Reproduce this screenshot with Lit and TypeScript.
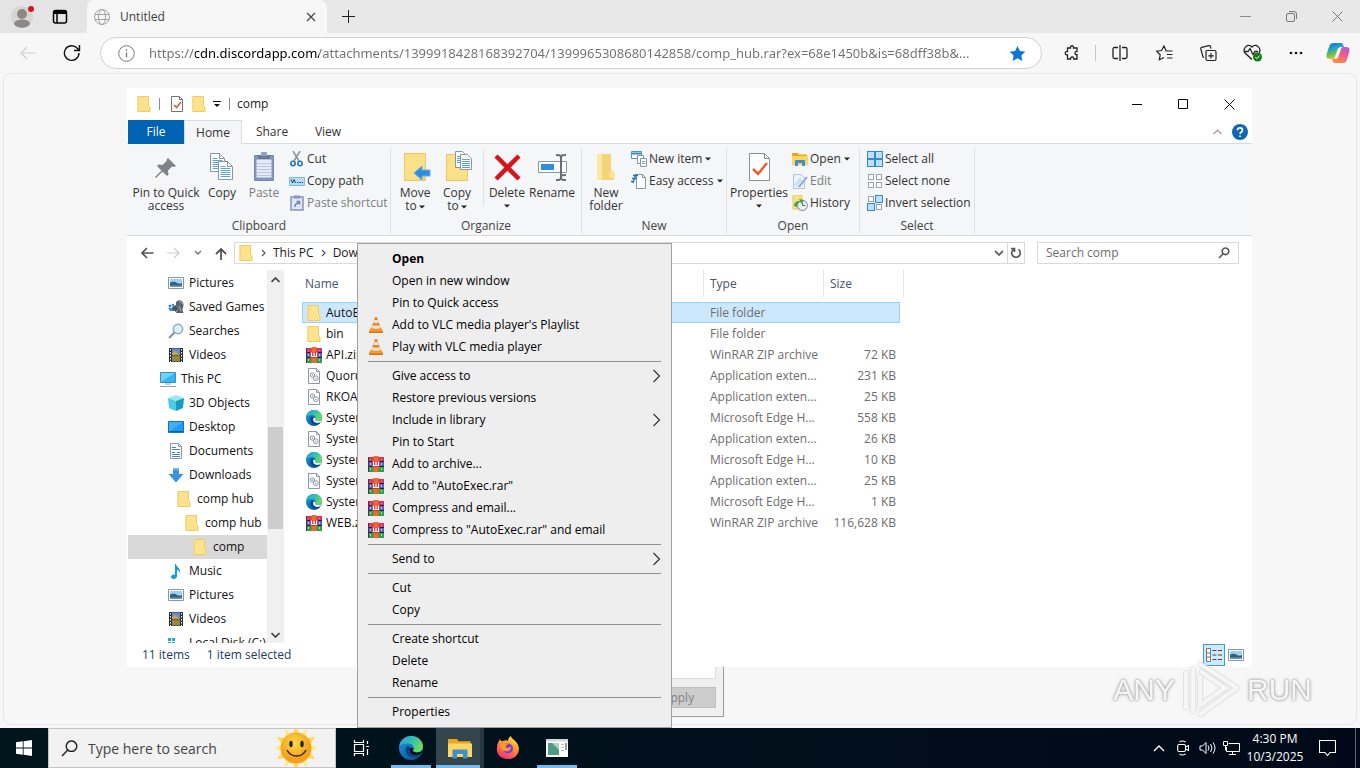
import { LitElement, html, svg, css, nothing, TemplateResult, SVGTemplateResult } from "lit";
import { customElement } from "lit/decorators.js";
import { classMap } from "lit/directives/class-map.js";

const pic = (w: number, h: number, body: SVGTemplateResult, box = `0 0 ${w} ${h}`) =>
  html`<svg class="pic" width=${w} height=${h} viewBox=${box} fill="none" aria-hidden="true">${body}</svg>`;

/* ---- small file-type glyphs, 16 x 16 ---- */
const folder = () => pic(16, 16, svg`
  <path d="M1.500 0h11v16h-11z" fill="#ffe38c"/><path d="M2 .5h10.500v15H2z" stroke="#efcb62"/>
  <path d="M12 9.500c1.800 0 2.500 1 2.500 2.800V16H11z" fill="#f4cf62"/><path d="M12.500 10v5" stroke="#fff0b0"/>`);
const rar = () => pic(16, 16, svg`
  <path d="M0 1h16v4.500H0z" fill="#d8345f"/><path d="M0 6h16v4.500H0z" fill="#5a5fd0"/><path d="M0 11h16v5H0z" fill="#2fa04a"/>
  <path d="M0 5.500h16M0 10.500h16" stroke="#2b2030"/><path d="M.5 1v15" stroke="#5a2c50"/>
  <path d="M2.500 3.500v1M2.500 7v2M2.500 12v2M13.500 3v1M13.500 7v2M13.500 12v2" stroke="#fff9"/>
  <path d="M5.500 0h5v16h-5z" fill="#ee6a2c"/><path d="M4 5h8v6H4z" fill="#c23a3c"/>
  <path d="M5.500 5.500v4h5v-4M8 5.500v4" stroke="#fff" stroke-width="1.200"/>`);
const dll = () => pic(16, 16, svg`
  <path d="M2.500.5h8l3 3v12h-11z" fill="#fff" stroke="#8c98a8"/><path d="M10.500.5v3h3" stroke="#8c98a8"/>
  <circle cx="6.500" cy="7" r="2.200" stroke="#8b96a5"/><circle cx="9.800" cy="10.200" r="2.400" stroke="#8b96a5"/>
  <circle cx="6.500" cy="7" r=".8" fill="#8b96a5"/><circle cx="9.800" cy="10.200" r=".8" fill="#8b96a5"/>`);
const edge = (s = 16) => pic(s, s, svg`
  <defs><linearGradient id="eg" x1="0" y1="0" x2="1" y2=".4"><stop offset="0" stop-color="#1fa2dc"/><stop offset=".6" stop-color="#35c1b1"/><stop offset="1" stop-color="#6bdc5c"/></linearGradient>
  <linearGradient id="eb" x1="0" y1="0" x2=".6" y2="1"><stop offset="0" stop-color="#1b9de2"/><stop offset="1" stop-color="#0c59a4"/></linearGradient></defs>
  <circle cx="12" cy="12" r="12" fill="url(#eb)"/>
  <path d="M.2 10.500C1 4.500 6 0 12 0c7 0 12 5 12 10.500 0 3.600-2.800 6-6 6-2.500 0-4.300-1-4.300-1.900 0-.6 1-.9 1-2.700 0-2.300-2.300-4.400-5.700-4.400C4.500 7.500 1 9 .2 10.500z" fill="url(#eg)"/>
  <path d="M9 9.500c-3 2-3.200 6.500-.6 9.500 3.200 3.600 9.200 3.400 13 .2-3.800 1.600-8 .9-10-1.900-1.200-1.700-1.400-3.700.2-5.600z" fill="#123f86"/>
  ${s < 20 ? svg`<path d="M11.600 11.700c-1.300 1.400-1.400 3.500-.1 5.200 2.200 2.900 6.700 3.300 10.300 1.200L24 13c-1 2.400-3.300 3.500-6 3.500-2.500 0-4.300-1-4.300-1.900 0-.6 1-.9 1-2.700z" fill="#fff" opacity=".9"/>`
    : svg`<path d="M11.600 11.700c-1.300 1.400-1.400 3.500-.1 5.200 2.200 2.900 6.700 3.300 10.300 1.200L24 13c-1 2.400-3.300 3.500-6 3.500-2.500 0-4.300-1-4.300-1.900 0-.6 1-.9 1-2.700z" fill="#00131c"/>`}`, "0 0 24 24");
const pictures = () => pic(16, 16, svg`
  <path d="M.5 2.500h15v11H.5z" fill="#fff" stroke="#8796a5"/><path d="M2 4h12v8H2z" fill="#9fd0f2"/>
  <path d="M2 8c3-2 5-1 7 0s4 1 5 0v4H2z" fill="#2e6285"/><path d="M2 10.500h12V12H2z" fill="#6d98b4"/>`);
const games = () => pic(16, 16, svg`
  <circle cx="2" cy="7" r="1.500" fill="#2a86d8"/><circle cx="5" cy="6" r="1.300" fill="#3a8fd8"/><path d="M0 9h6v3H2z" fill="#3a8fd8"/><path d="M4 8l4-2 2 4-2 3-3-2z" fill="#46525e"/>
  <path d="M9 2c3-2 6.500 0 6.500 4 0 2-1 3-1 5l1 3H8l2-4C8 8 7 4 9 2z" fill="#59636c"/><path d="M11 3c1-.8 3 0 3 2M11 7l2 5" stroke="#aab4bb"/>`);
const searches = () => pic(16, 16, svg`
  <circle cx="10" cy="6" r="4.700" fill="#d7eefc" stroke="#8fa9bd" stroke-width="1.500"/><path d="M6.500 9.500 1 15" stroke="#7b93a6" stroke-width="2"/>`);
const videos = () => pic(16, 16, svg`
  <path d="M1 1h14v14H1z" fill="#26303c"/><path d="M4 1.500h8V8H4z" fill="#6e8bc8"/><path d="M4 8.500h8v6H4z" fill="#9a8440"/>
  <path d="M4 6l3-2 5 4H4z" fill="#c4a64b"/><path d="M2.500 2v13M13.500 2v13" stroke="#fff" stroke-dasharray="1.500 1.500"/>`);
const thisPc = () => pic(16, 16, svg`
  <path d="M.5 1.500h15v10H.5z" fill="#31b4f3" stroke="#3b8ec0"/><path d="M1 2h14L1 11z" fill="#6fd0fb"/><path d="M5 13h6M0 15.500h16" stroke="#8ea0ad"/>`);
const cube = () => pic(16, 16, svg`
  <path d="M8 0l8 3-8 3-8-3z" fill="#9be7f3"/><path d="M0 3l8 3v10l-7-3z" fill="#49cbe0"/><path d="M16 3L8 6v10l7-3z" fill="#149dbd"/>`);
const desktop = () => pic(16, 16, svg`
  <path d="M.5 2.500h15v11H.5z" fill="#1e9af0" stroke="#1771b8"/><path d="M1 3h14L1 13z" fill="#3cb0fa"/><path d="M1 12.500h14" stroke="#1260a0"/>`);
const documents = () => pic(16, 16, svg`
  <path d="M2.500.5h8l3 3v12h-11z" fill="#fff" stroke="#8c98a8"/><path d="M10.500.5v3h3" stroke="#8c98a8"/>
  <path d="M4 4.500h4M4 6.500h8M4 9.500h3M9 9.500h3M4 11.500h8M4 13.500h8" stroke="#3b8ac9"/>`);
const downloads = () => pic(16, 16, svg`<path d="M5 1h6v6h4.500L8 15.500.5 7H5z" fill="#3b93dc"/><path d="M5 1h6v2H5z" fill="#79b9ee"/>`);
const music = () => pic(16, 16, svg`
  <path d="M8 1c0 3 5 4 4 9-.5-2-2-3-3-3v6c0 4-6 3.500-6 1 0-2 2.500-3 4-2V1z" fill="#1e95e4"/>`);
const disk = () => pic(16, 16, svg`
  <path d="M0 3h3v3H0zM4 3h3v3H4zM0 7h3v2H0zM4 7h3v2H4z" fill="#22a7e0"/><path d="M0 11h16v3H0z" fill="#b9c0c6"/><path d="M8 8.500h7" stroke="#99a4ac"/>`);
const vlc = () => pic(16, 16, svg`
  <path d="M3 10.500h10l2.300 4H.7z" fill="#f79a24"/><path d="M1 14.200h14V16H1z" fill="#e07410"/>
  <path d="M7 0h2l3.700 11c-1 1.700-8.400 1.700-9.400 0z" fill="#ef8420"/><path d="M6.100 3h3.800l1 3H5.100zM4.200 8.500h7.600l.8 2.500c-2 1.200-7.200 1.200-9.200 0z" fill="#e6e2dc"/>`);

/* ---- ribbon glyphs ---- */
const pin = () => pic(32, 32, svg`<path d="M18 7l8 8-2 1-2-.500-4 4 .5 4-1.500 1.500-4.500-4.500L6 27l-1-1 6.500-6.500L7 15l1.500-1.500 4 .5 4-4L17 8z" fill="#7d8389"/>`);
const page = (x: number, y: number) => svg`
  <path d=${`M${x} ${y}h9l5 5v13h-14z`} fill="#fff" stroke="#8796a8"/><path d=${`M${x + 9} ${y}v5h5`} stroke="#8796a8"/>
  <path d=${`M${x + 2} ${y + 5}h5M${x + 2} ${y + 7}h10M${x + 2} ${y + 9}h10M${x + 2} ${y + 11}h10M${x + 2} ${y + 13}h10M${x + 2} ${y + 15}h10`} stroke="#5aa2dc"/>`;
const copyBig = () => pic(32, 32, svg`${page(4.5, 2.5)}${page(12.5, 10.5)}`);
const pasteBig = () => pic(32, 32, svg`
  <path d="M6.500 4.500h19v25h-19z" fill="#8496bd" stroke="#7488b2"/><path d="M8.500 8.500h15v18h-15z" fill="#e5ebf6"/>
  <path d="M9 12.500h14M9 15.500h14M9 18.500h14M9 21.500h14M9 24.500h14" stroke="#b9c7de"/><path d="M10 4h12v4H10z" fill="#66799f"/><path d="M13 1h6v4h-6z" fill="#93a4c6"/>`);
const moveTo = () => pic(32, 32, svg`
  <path d="M5.500 2.500h21v27h-21z" fill="#fbe08a" stroke="#ecc75f"/><path d="M27 20v10h-7v-6z" fill="#f1ce6a"/>
  <path d="M15 22l8-7v4h8v6h-8v4z" fill="#2f8de0" stroke="#6cb0ea"/>`);
const copyTo = () => pic(32, 32, svg`
  <path d="M5.500 3.500h21v26h-21z" fill="#fbe08a" stroke="#ecc75f"/>
  <path d="M14.500.5h7l4 4v12h-11z" fill="#fff" stroke="#8796a8"/><path d="M19.500 3.500h7l4 4v11h-11z" fill="#fff" stroke="#8796a8"/>
  <path d="M16 5.500h3M16 7.500h3M16 9.500h3M16 11.500h3M21 8.500h8M21 10.500h8M21 12.500h8M21 14.500h8M21 16.500h8" stroke="#5aa2dc"/>`);
const deleteBig = () => pic(32, 32, svg`<path d="M5 5l23 23M28 5L5 28" stroke="#d6141e" stroke-width="4.500"/>`);
const rename = () => pic(32, 32, svg`
  <path d="M2.500 10.500h28v11h-28z" fill="#fff" stroke="#8796a8"/><path d="M5 13h13v6H5z" fill="#2f8de0"/>
  <path d="M20 4c3 0 5 0 5 2.500v20c0-2.500 0-2.500 5-2.500M30 4c-3 0-5 0-5 2.500M20 29c3 0 5 0 5-2.500 0 2.500 2 2.500 5 2.500" stroke="#666e76" stroke-width="2"/>`);
const newFolder = () => pic(32, 32, svg`<path d="M7 3h14v18l3 3v5H7z" fill="#f6d377"/><path d="M7 3h5v26H7z" fill="#fbe7a6"/><path d="M21 18l4 4v6l-6-2z" fill="#fbe4a0"/>`);
const propsBig = () => pic(32, 32, svg`
  <path d="M6.500 2.500h15l5 5v22h-20z" fill="#fff" stroke="#8b8f94"/><path d="M21.500 2.500v5h5" stroke="#8b8f94"/><path d="M10 18l5 5 9-11" stroke="#ef5a2c" stroke-width="2.500"/>`);
const cut = () => pic(16, 16, svg`
  <path d="M4 0l6 10M11 0L5 10" stroke="#8a929a" stroke-width="1.500"/><circle cx="4" cy="12.500" r="2.200" stroke="#2675bd" stroke-width="1.600"/><circle cx="11" cy="12.500" r="2.200" stroke="#2675bd" stroke-width="1.600"/>`);
const copyPath = () => pic(16, 16, svg`<path d="M.5 4.500h15v8H.5z" fill="#b4dcf7" stroke="#7db9e3"/><path d="M2 6.500l1.500 3.500L5 6.500 6.500 10M8 9.500h1.500M10.500 9.500H12M13 9.500h1" stroke="#17456e"/>`);
const pasteShort = () => pic(16, 16, svg`
  <path d="M2 2h12v13H2z" fill="#dfe7f4" stroke="#8496bd" stroke-width="1.500"/><path d="M5 .5h6v3H5z" fill="#8496bd"/><path d="M6 12c0-3 1-4 4-4M7.500 6.500h3v3" stroke="#6d83b0" stroke-width="1.500"/>`);
const newItem = () => pic(16, 16, svg`
  <path d="M.5.5h10v7H.5z" fill="#fff" stroke="#5b8dc0"/><path d="M1 2.500h9" stroke="#3a82c9" stroke-width="2"/><path d="M6.500 4.500h6v8h-6z" fill="#fff" stroke="#8796a8"/>
  <path d="M9.500 7.500h6v8h-6z" fill="#fff" stroke="#8796a8"/><path d="M11 10.500h3M11 12.500h3" stroke="#5aa2dc"/>`);
const easy = () => pic(16, 16, svg`
  <path d="M5.500 1.500h6l3 3v11h-9z" fill="#fff" stroke="#8796a8"/><path d="M11.500 1.500v3h3" stroke="#8796a8"/><path d="M2 2.500h5M1 5.500h5M0 8.500h3M5 1l-3 9" stroke="#2b6fb5" stroke-width="1.300"/>`);
const openSm = (s = 16) => pic(s, s, svg`
  <path d="M0 2h6l1 1.500h8V14H0z" fill="#e9a820"/><path d="M0 5h16v9H0z" fill="#fbd662"/><path d="M3 9h10v6h-3v-3H6v3H3z" fill="#3f8fce"/>`, "0 0 16 16");
const edit = () => pic(16, 16, svg`<path d="M1.500 1.500h8l3 3v11h-11z" fill="#edf3fa" stroke="#b3c4d8"/><path d="M2 12l6-8 3 4-5 6z" fill="#cddff2"/><path d="M15 4L7 14" stroke="#93a9c6" stroke-width="2"/>`);
const history = () => pic(16, 16, svg`
  <path d="M1 0h9v14H1z" fill="#fbe08a" stroke="#ecc75f"/><circle cx="10.500" cy="10.500" r="5" fill="#e8eef4" stroke="#7c8b9a"/><path d="M10.500 7.500v3h3" stroke="#5a6b7a"/><path d="M2 11c0-3 2-5 6-5l-1-2 5 1-3 4-.5-2C6 7 5 9 5 12z" fill="#3fa63c"/>`);
const selectPic = (kind: string) => {
  const on = (i: number) => kind === "all" || (kind === "invert" && (i === 1 || i === 2));
  return pic(16, 16, svg`${[0, 1, 2, 3].map((i) => {
    const x = (i % 2) * 8 + (on(i) ? 0.5 : 1.5), y = (i > 1 ? 8 : 0) + (on(i) ? 0.5 : 1.5), s = on(i) ? 7 : 5;
    return svg`<rect x=${x} y=${y} width=${s} height=${s} fill=${on(i) ? "#bfe0fa" : "#fff"} stroke=${on(i) ? "#2f8bd8" : "#9da1a5"}/>`;
  })}`);
};
const propsSm = () => pic(16, 16, svg`
  <path d="M2.500.5h8l3 3v12h-11z" fill="#fff" stroke="#70757a"/><path d="M10.500.5v3h3" stroke="#70757a"/><path d="M5 9l2.500 2.500L12 6" stroke="#e26036" stroke-width="1.700"/>`);
const caret = (extra = "") => html`<svg class="pic ${extra}" width="6" height="4" viewBox="0 0 6 4" aria-hidden="true"><path d="M0 .5h6L3 3.500z" fill="#222"/></svg>`;
const stroke = (w: number, h: number, d: string, color = "#111", sw = 1) =>
  pic(w, h, svg`<path d=${d} stroke=${color} stroke-width=${sw}/>`);

type Glyph = () => TemplateResult;
const TREE: [Glyph, string, number, boolean?][] = [
  [pictures, "Pictures", 1], [games, "Saved Games", 1], [searches, "Searches", 1], [videos, "Videos", 1],
  [thisPc, "This PC", 0], [cube, "3D Objects", 1], [desktop, "Desktop", 1], [documents, "Documents", 1],
  [downloads, "Downloads", 1], [folder, "comp hub", 2], [folder, "comp hub", 3], [folder, "comp", 4, true],
  [music, "Music", 1], [pictures, "Pictures", 1], [videos, "Videos", 1], [disk, "Local Disk (C:)", 1],
];
const FILES: [Glyph, string, string, string][] = [
  [folder, "AutoExec", "File folder", ""], [folder, "bin", "File folder", ""],
  [rar, "API.zip", "WinRAR ZIP archive", "72 KB"], [dll, "Quorum", "Application exten...", "231 KB"],
  [dll, "RKOA", "Application exten...", "25 KB"], [() => edge(), "System", "Microsoft Edge H...", "558 KB"],
  [dll, "System", "Application exten...", "26 KB"], [() => edge(), "System", "Microsoft Edge H...", "10 KB"],
  [dll, "System", "Application exten...", "25 KB"], [() => edge(), "System", "Microsoft Edge H...", "1 KB"],
  [rar, "WEB.zip", "WinRAR ZIP archive", "116,628 KB"],
];
type Entry = { t: string; icon?: Glyph; sub?: boolean; bold?: boolean } | null;
const MENU: Entry[] = [
  { t: "Open", bold: true }, { t: "Open in new window" }, { t: "Pin to Quick access" },
  { t: "Add to VLC media player's Playlist", icon: vlc }, { t: "Play with VLC media player", icon: vlc }, null,
  { t: "Give access to", sub: true }, { t: "Restore previous versions" }, { t: "Include in library", sub: true }, { t: "Pin to Start" },
  { t: "Add to archive...", icon: rar }, { t: 'Add to "AutoExec.rar"', icon: rar }, { t: "Compress and email...", icon: rar },
  { t: 'Compress to "AutoExec.rar" and email', icon: rar }, null, { t: "Send to", sub: true }, null,
  { t: "Cut" }, { t: "Copy" }, null, { t: "Create shortcut" }, { t: "Delete" }, { t: "Rename" }, null, { t: "Properties" },
];

const base = css`
  * { box-sizing: border-box; }
  button, input { font: inherit; color: inherit; border: 0; background: none; padding: 0; margin: 0; outline: 0; border-radius: 0; }
  .pic { display: block; flex: none; }
`;

@customElement("browser-chrome")
class BrowserChrome extends LitElement {
  static styles = [base, css`
    :host { display: block; font-size: 12px; color: #3b3b3b; }
    button { display: flex; align-items: center; justify-content: center; flex: none; }
    .tabs { display: flex; height: 33px; background: #e8e8e8; align-items: stretch; }
    .lead { display: flex; width: 87px; padding-left: 3px; background: #e4e4e4; border-bottom-right-radius: 8px; }
    .lead button { width: 38px; }
    .tab { display: flex; align-items: center; gap: 10px; width: 240px; padding: 0 10px 0 7px; background: #f7f7f7; border-radius: 8px 8px 0 0; }
    .tab span { flex: 1; }
    .plus { width: 42px; }
    .gap { flex: 1; }
    .ctl { width: 46px; }
    .bar { display: flex; height: 40px; align-items: center; padding: 0 2px 0 6px; background: #f7f7f7; }
    .nav { width: 44px; height: 32px; }
    .pilot { width: 40px; }
    .url { flex: 1; display: flex; align-items: center; gap: 14px; height: 32px; margin: 0 8px 0 6px; padding: 0 15px 0 17px;
      background: #fff; border: 1px solid #d2d2d2; border-radius: 16px; min-width: 0; }
    .url input { flex: 1; min-width: 0; height: 24px; font-family: "Noto Sans", sans-serif; font-size: 13px; color: #707070;
      background: linear-gradient(90deg, #707070 46px, #000 46px, #000 170px, #707070 170px); -webkit-background-clip: text; background-clip: text; -webkit-text-fill-color: transparent; }
    .rule { width: 1px; height: 16px; margin: 0 2px 0 1px; background: #c8c8c8; }
  `];
  render() {
    return html`
      <div class="tabs">
        <div class="lead">
          <button aria-label="Profile">${pic(24, 24, svg`<circle cx="12" cy="12" r="11" fill="#d8d6d4"/><circle cx="12" cy="9" r="5" fill="#8b8886"/><path d="M4 19c0-6 16-6 16 0-3 5-13 5-16 0z" fill="#8b8886"/><circle cx="21" cy="4" r="3" fill="#d81124"/>`, "0 0 24 24")}</button>
          <button aria-label="Tab actions">${pic(16, 16, svg`<rect x="1.500" y="1.500" width="13" height="12.500" rx="2" stroke="#000" stroke-width="1.500"/><path d="M1 2h14v3H1z" fill="#000"/><path d="M5 4v10" stroke="#000" stroke-width="1.500"/>`)}</button>
        </div>
        <div class="tab">
          ${pic(16, 16, svg`<g stroke="#a2a2a2"><circle cx="8" cy="8" r="7.500"/><ellipse cx="8" cy="8" rx="3.500" ry="7.500"/><path d="M1 5.500h14M1 10.500h14"/></g>`)}
          <span>Untitled</span>
          <button aria-label="Close tab">${stroke(12, 12, "M2 2l8 8M10 2l-8 8", "#444", 1.2)}</button>
        </div>
        <button class="plus" aria-label="New tab">${stroke(15, 15, "M7.5 1v13M1 7.5h13", "#222")}</button>
        <div class="gap"></div>
        <button class="ctl" aria-label="Minimize">${stroke(11, 11, "M0 5.500h11", "#8a8a8a")}</button>
        <button class="ctl" aria-label="Restore">${stroke(11, 11, "M2 2.500h5q1.500 0 1.500 1.500v5q0 1.500-1.500 1.500H2Q.5 10.500.5 9V4Q.5 2.500 2 2.500zM3 .5h5Q10.500.5 10.500 3v5", "#777")}</button>
        <button class="ctl" aria-label="Close">${stroke(11, 11, "M.5.5l10 10M10.500.5l-10 10", "#777")}</button>
      </div>
      <div class="bar">
        <button class="nav" aria-label="Back">${stroke(16, 14, "M15.500 7H1M7 1L1 7l6 6", "#cfcfcf", 1.2)}</button>
        <button class="nav" aria-label="Reload">${stroke(18, 18, "M16 9A7.300 7.300 0 1 1 14 4l2 2M16.500 1v5.500H11", "#111", 1.4)}</button>
        <div class="url">
          ${pic(17, 17, svg`<circle cx="8.500" cy="8.500" r="7.800" stroke="#777"/><path d="M8.500 7.500v5M8.500 4.500v1.500" stroke="#777" stroke-width="1.300"/>`)}
          <input aria-label="Address" spellcheck="false" value="https://cdn.discordapp.com/attachments/1399918428168392704/1399965308680142858/comp_hub.rar?ex=68e1450b&is=68dff38b&..." />
          ${pic(17, 17, svg`<path d="M8.500 1l2.400 4.900 5.400.8-3.900 3.800.9 5.400-4.800-2.600-4.800 2.600.9-5.400L.7 6.700l5.400-.8z" fill="#0b78d4"/>`)}
        </div>
        <button class="nav" aria-label="Extensions">${stroke(16, 16, "M3.500 3h3c-.6-3 3.600-3 3 0h3.500v3.500c-2.700-.5-2.700 3.700 0 3.200V14H9.800c.5-2.700-3.700-2.700-3.200 0H3.500V9.800c-3 .6-3-3.900 0-3.300z", "#222", 1.3)}</button>
        <span class="rule"></span>
        <button class="nav" aria-label="Split screen">${stroke(16, 16, "M6 2.500H2.500Q1 2.500 1 4v8q0 1.500 1.500 1.500H6M10 2.500h3.500Q15 2.500 15 4v8q0 1.500-1.500 1.500H10M8 0v16", "#222", 1.3)}</button>
        <button class="nav" aria-label="Favorites">${stroke(17, 16, "M10 5.500L8 1 5.500 5.500l-5 .7 3.700 3.600-.9 5L8 12.500M9.500 6h7M11 9.500h5.500M11 13h5.500", "#222", 1.2)}</button>
        <button class="nav" aria-label="Collections">${stroke(17, 17, "M6 6.500q0-1 1-1h7.500q1.500 0 1.500 1.500v7q0 1.500-1.500 1.500h-7Q6 15.500 6 14zM11 8v5.500M8.300 10.800h5.500M4 12.500l-1-.7L.8 4q-.3-1.200.9-1.600L8.700.7q1.300-.2 1.800 1l.5 2", "#222", 1.2)}</button>
        <button class="nav" aria-label="Browser essentials">${pic(19, 18, svg`<path d="M9 15.500L2 9C-1 4.500 5-1.500 9 3c4-4.500 10 1.500 7 6M1 7.500h4l2-3 3 6 2-3h3" stroke="#222" stroke-width="1.300"/><circle cx="14.500" cy="13" r="4.500" fill="#117d1b"/><path d="M12.300 13l1.600 1.600 2.800-3" stroke="#fff"/>`)}</button>
        <button class="nav" aria-label="Settings and more">${pic(14, 4, svg`<circle cx="2" cy="2" r="1.300" fill="#111"/><circle cx="7" cy="2" r="1.300" fill="#111"/><circle cx="12" cy="2" r="1.300" fill="#111"/>`)}</button>
        <button class="nav pilot" aria-label="Copilot">${pic(24, 22, svg`
          <defs><linearGradient id="ca" x1="0" y1="0" x2=".4" y2="1"><stop offset="0" stop-color="#1b5fd0"/><stop offset=".4" stop-color="#1aa0d8"/><stop offset=".7" stop-color="#6cc04a"/><stop offset="1" stop-color="#f0c020"/></linearGradient>
          <linearGradient id="cb" x1="1" y1="0" x2=".3" y2="1"><stop offset="0" stop-color="#a45ce8"/><stop offset=".5" stop-color="#ef5c8c"/><stop offset="1" stop-color="#ff8a3c"/></linearGradient></defs>
          <path d="M8 1h7c2 0 2 2 3 4h-3c-2 0-3 1-4 4l-2 6c-.5 1.500-1 2-3 2H4c-4 0-4-3-3-6l2-6c1-3 2-4 5-4z" fill="url(#ca)"/>
          <path d="M16 21H9c-2 0-2-2-3-4h3c2 0 3-1 4-4l2-6c.5-1.500 1-2 3-2h2c4 0 4 3 3 6l-2 6c-1 3-2 4-5 4z" fill="url(#cb)"/>`)}</button>
      </div>`;
  }
}

@customElement("file-explorer")
class FileExplorer extends LitElement {
  static styles = [base, css`
    :host { display: flex; flex-direction: column; background: #fff; font-size: 12px; line-height: 16px; color: #1a1a1a; }
    .title { display: flex; align-items: center; height: 32px; padding-left: 9px; flex: none; }
    .title .bar { width: 1px; height: 12px; background: #8c8c8c; }
    .qa { display: flex; align-items: center; width: 93px; gap: 6px; }
    .qa .bar { margin: 0 3px 0 1px; }
    .name { flex: 1; padding-left: 7px; }
    .wc { display: flex; width: 46px; height: 32px; align-items: center; justify-content: center; }
    .tabs { display: flex; height: 24px; flex: none; padding-left: 1px; border-bottom: 1px solid #dadbdc; color: #333; }
    .tabs button { height: 24px; width: 56px; }
    .tabs .file { background: #0063b1; color: #fff; }
    .tabs .home { width: 58px; background: #f5f6f7; border: 1px solid #dadbdc; border-bottom: 0; }
    .tabs .share { width: 60px; }
    .tabs .view { width: 52px; }
    .help { display: flex; gap: 10px; align-items: center; margin-left: auto; padding-right: 4px; }
    .ribbon { display: flex; height: 92px; flex: none; padding-left: 1px; background: #f5f6f7; border-bottom: 1px solid #dadbdc; color: #333; }
    .group { display: flex; flex-direction: column; border-right: 1px solid #e0e1e2; margin: 4px 0 2px; }
    .g1 { width: 263px; } .g2 { width: 191px; } .g3 { width: 145px; } .g4 { width: 133px; } .g5 { width: 115px; }
    .tools { display: flex; flex: 1; padding: 0 3px; }
    .cap { text-align: center; height: 15px; color: #444; }
    .big { display: flex; flex-direction: column; align-items: center; flex: none; width: 42px; padding-top: 3px; line-height: 13px; text-align: center; gap: 3px; height: 66px; }
    .w70 { width: 70px; } .w58 { width: 58px; } .w48 { width: 48px; }
    .big .lab { display: block; white-space: pre-line; }
    .inl { display: inline-block; vertical-align: middle; margin-left: 2px; }
    .drop { display: block; margin: 5px auto 0; }
    .off { color: #7c7c7c; }
    .vr { width: 1px; height: 56px; margin: 2px 2px 0 5px; background: #e0e1e2; }
    .col { display: flex; flex-direction: column; padding-left: 4px; }
    .sm { display: flex; align-items: center; height: 22px; gap: 2px; white-space: nowrap; }
    .sm .inl { margin-left: 1px; }
    .addr { display: flex; align-items: center; height: 34px; flex: none; padding: 0 13px; }
    .arrows { display: flex; align-items: center; width: 94px; gap: 13px; }
    .path { display: flex; flex: 1; align-items: center; height: 22px; border: 1px solid #d9d9d9; padding-left: 3px; gap: 7px; }
    .path .tail { display: flex; align-items: center; margin-left: auto; height: 20px; }
    .path .ref { display: flex; align-items: center; justify-content: center; width: 17px; height: 20px; border-left: 1px solid #d9d9d9; margin-left: 3px; }
    .find { display: flex; align-items: center; width: 202px; height: 22px; border: 1px solid #d9d9d9; margin-left: 12px; padding: 0 8px; }
    .find input { flex: 1; min-width: 0; }
    .find input::placeholder { color: #6d6d6d; opacity: 1; }
    .body { display: flex; flex: 1; min-height: 0; }
    .tree { width: 140px; overflow: hidden; padding: 1px 0 0 1px; }
    .node { display: flex; align-items: center; gap: 5px; height: 24px; width: 139px; white-space: nowrap; color: #111; }
    .l0 { padding-left: 32px; } .l1 { padding-left: 40px; } .l2 { padding-left: 48px; } .l3 { padding-left: 56px; } .l4 { padding-left: 64px; }
    .node.on { background: #d9d9d9; }
    .scroll { display: flex; flex-direction: column; width: 17px; background: #f0f0f0; align-items: center; justify-content: space-between; padding: 7px 0 5px; margin-right: 18px; }
    .track { flex: 1; width: 15px; display: grid; grid-template-rows: 140fr 103fr 99fr; margin: 4px 0; }
    .thumb { grid-row: 2; background: #cdcdcd; }
    table { border-spacing: 0; table-layout: fixed; width: 602px; align-self: flex-start; }
    th { height: 27px; padding: 0 6px; text-align: left; font-weight: 400; color: #44546f; border-right: 1px solid #e5e5e5; }
    th:first-child { padding-left: 3px; }
    th:nth-child(3) { border-right: 0; }
    td { height: 21px; padding: 0 4px 0 6px; color: #6d6d6d; overflow: hidden; white-space: nowrap; }
    td:first-child { padding-left: 4px; color: #111; }
    td:nth-child(3) { text-align: right; padding-left: 0; }
    .cell { display: flex; align-items: center; gap: 4px; }
    .spacer td { height: 5px; padding: 0; }
    .c1 { width: 402px; } .c2 { width: 120px; } .c3 { width: 76px; } .c4 { width: 4px; }
    .sel td { background: #cce8ff; border: solid #99d1ff; border-width: 1px 0; }
    .sel td:first-child { border-left-width: 1px; padding-left: 3px; }
    .sel td:nth-child(3) { border-right-width: 1px; }
    .sel td:nth-child(4) { background: none; border: 0; padding: 0; }
    .status { display: flex; align-items: center; height: 24px; flex: none; padding: 0 8px 0 15px; gap: 17px; color: #1d3a66; }
    .modes { display: flex; align-items: center; margin-left: auto; gap: 3px; }
    .modes button { display: flex; align-items: center; justify-content: center; width: 16px; height: 22px; }
    .modes .cur { width: 22px; background: #cdeaff; border: 1px solid #3f9bdc; }
  `];
  big(icon: Glyph, label: string | TemplateResult, cls = "") {
    return html`<button class="big ${cls}">${icon()}<span class="lab">${label}</span></button>`;
  }
  sm(icon: TemplateResult, label: string, drop = false, off = false) {
    return html`<button class=${classMap({ sm: true, off })}>${icon}<span>${label}</span>${drop ? caret("inl") : nothing}</button>`;
  }
  group(cls: string, cap: string, body: TemplateResult) {
    return html`<section class="group ${cls}"><div class="tools">${body}</div><div class="cap">${cap}</div></section>`;
  }
  render() {
    const crumb = stroke(5, 8, "M1 1l3 3-3 3", "#555", 1.2);
    return html`
      <header class="title">
        <div class="qa">${folder()}<i class="bar"></i>${propsSm()}${folder()}${pic(8, 8, svg`<path d="M0 1.500h8" stroke="#111"/><path d="M1 4h6L4 7z" fill="#111"/>`)}</div>
        <i class="bar"></i><span class="name">comp</span>
        <button class="wc" aria-label="Minimize">${stroke(10, 10, "M0 5.500h10", "#000")}</button>
        <button class="wc" aria-label="Maximize">${stroke(10, 10, "M.5.5h9v9h-9z", "#000")}</button>
        <button class="wc" aria-label="Close">${stroke(11, 11, "M.5.5l10 10M10.500.5l-10 10", "#000")}</button>
      </header>
      <nav class="tabs">
        <button class="file">File</button><button class="home">Home</button><button class="share">Share</button><button class="view">View</button>
        <div class="help">${stroke(9, 6, "M.5 5l4-4 4 4", "#9a9a9a", 1.2)}
          ${pic(16, 16, svg`<circle cx="8" cy="8" r="8" fill="#0f66b5"/><path d="M5.500 6.200c0-3.200 5-3 5 0 0 1.800-2.400 1.800-2.400 3.800M8 11.500v1.500" stroke="#fff" stroke-width="1.700"/>`)}</div>
      </nav>
      <div class="ribbon">
        ${this.group("g1", "Clipboard", html`
          ${this.big(pin, "Pin to Quick\naccess", "w70")}${this.big(copyBig, "Copy")}${this.big(pasteBig, "Paste", "off")}
          <div class="col">${this.sm(cut(), "Cut")}${this.sm(copyPath(), "Copy path")}${this.sm(pasteShort(), "Paste shortcut", false, true)}</div>`)}
        ${this.group("g2", "Organize", html`
          ${this.big(moveTo, html`Move<br />to${caret("inl")}`)}${this.big(copyTo, html`Copy<br />to${caret("inl")}`)}
          <i class="vr"></i>${this.big(deleteBig, html`Delete${caret("drop")}`)}${this.big(rename, "Rename", "w48")}`)}
        ${this.group("g3", "New", html`
          ${this.big(newFolder, "New\nfolder")}
          <div class="col">${this.sm(newItem(), "New item", true)}${this.sm(easy(), "Easy access", true)}</div>`)}
        ${this.group("g4", "Open", html`
          ${this.big(propsBig, html`Properties${caret("drop")}`, "w58")}
          <div class="col">${this.sm(openSm(), "Open", true)}${this.sm(edit(), "Edit", false, true)}${this.sm(history(), "History")}</div>`)}
        ${this.group("g5", "Select", html`
          <div class="col">${this.sm(selectPic("all"), "Select all")}${this.sm(selectPic("none"), "Select none")}${this.sm(selectPic("invert"), "Invert selection")}</div>`)}
      </div>
      <div class="addr">
        <div class="arrows">
          ${stroke(14, 12, "M13.500 6H2M7 1L2 6l5 5", "#555", 1.7)}${stroke(14, 12, "M0 6h12M7 1l5 5-5 5", "#ccc", 1.2)}
          ${stroke(8, 6, "M1 1l3 3 3-3", "#777", 1.5)}${stroke(12, 13, "M6 13V2M1 7l5-5 5 5", "#555", 1.8)}
        </div>
        <div class="path">${folder()}${crumb}<span>This PC</span>${crumb}<span>Downloads</span>
          <div class="tail">${stroke(10, 7, "M1 1l4 4 4-4", "#666", 1.8)}<button class="ref" aria-label="Refresh">${stroke(12, 12, "M8.500 2.500A4.300 4.300 0 1 1 3.500 2.500M1 1.500h3.500V5", "#555", 1.6)}</button></div>
        </div>
        <label class="find"><input type="text" aria-label="Search comp" placeholder="Search comp" />${stroke(12, 12, "M7.500 1a3.300 3.300 0 1 0 .01 0M5 7L1 11", "#555", 1.6)}</label>
      </div>
      <div class="body">
        <div class="tree">${TREE.map(([icon, t, l, on]) => html`<div class="node l${l} ${on ? "on" : ""}">${icon()}<span>${t}</span></div>`)}</div>
        <div class="scroll">${stroke(9, 6, "M.5 5l4-4 4 4", "#444", 1.7)}<div class="track"><div class="thumb"></div></div>${stroke(9, 6, "M.5 1l4 4 4-4", "#444", 1.7)}</div>
        <table>
          <colgroup><col class="c1" /><col class="c2" /><col class="c3" /><col class="c4" /></colgroup>
          <thead><tr><th>Name</th><th>Type</th><th>Size</th><th></th></tr></thead>
          <tbody><tr class="spacer"><td colspan="4"></td></tr>
          ${FILES.map(([icon, n, type, size], i) => html`<tr class=${i ? "" : "sel"}><td><div class="cell">${icon()}<span>${n}</span></div></td><td>${type}</td><td>${size}</td><td></td></tr>`)}</tbody>
        </table>
      </div>
      <footer class="status"><span>11 items</span><span>1 item selected</span>
        <div class="modes"><button class="cur" aria-label="Details view">${pic(16, 14, svg`<path d="M.5.5h4v13h-4zM.5 5h4M.5 9h4" stroke="#777" fill="#fff"/><path d="M6.500 2.500h4M12 2.500h4M6.500 7h4M12 7h4M6.500 11.500h4M12 11.500h4" stroke="#444"/>`)}</button>
        <button aria-label="Large icons">${pictures()}</button></div></footer>`;
  }
}

@customElement("context-menu")
class ContextMenu extends LitElement {
  static styles = [base, css`
    :host { display: flex; flex-direction: column; background: #eee; border: 1px solid #a0a0a0; padding: 4px 10px; font-size: 12px; line-height: 16px; color: #000; }
    button { display: grid; grid-template-columns: 16px 1fr 9px; gap: 8px; align-items: center; height: 22px; text-align: left; white-space: nowrap; }
    .text { padding-bottom: 1px; }
    .bold { font-weight: 700; }
    hr { width: 100%; height: 1px; border: 0; margin: 3px 0; background: #919191; }
  `];
  render() {
    return MENU.map((m) => m === null ? html`<hr />` : html`
      <button class=${m.bold ? "bold" : ""} role="menuitem"><span>${m.icon ? m.icon() : nothing}</span><span class="text">${m.t}</span>${m.sub ? stroke(9, 14, "M1.500 1l6 6-6 6", "#333", 1.2) : nothing}</button>`);
  }
}

@customElement("task-bar")
class TaskBar extends LitElement {
  static styles = [base, css`
    :host { display: flex; height: 40px; flex: none; background: linear-gradient(90deg, #00151c, #01101c 50%, #010918); color: #fff; font-size: 12px; line-height: 18px; }
    button { display: flex; align-items: center; justify-content: center; flex: none; width: 48px; height: 40px; }
    .search { display: flex; align-items: center; gap: 10px; width: 288px; background: #f2f2f2; border: 1px solid #c4c4c4; padding: 0 6px 0 12px; }
    .search input { flex: 1; min-width: 0; font-size: 14px; height: 30px; }
    .search input::placeholder { color: #444; opacity: 1; }
    .view { width: 50px; }
    .app { width: 50px; border: solid transparent; border-width: 0 5px; }
    .run { background: linear-gradient(#76b9ed, #76b9ed) bottom / 100% 3px no-repeat; background-clip: padding-box; }
    .act { width: 48px; border-width: 0; background: linear-gradient(#76b9ed, #76b9ed) bottom / 100% 3px no-repeat, #33454d; box-shadow: inset -4px 0 #26373f; }
    .fox { width: 48px; }
    .tray { display: flex; align-items: center; margin-left: auto; }
    .tray button { width: 24px; }
    .tray .clock { width: 64px; }
    .tray .note { width: 40px; }
    .peek { width: 5px; height: 40px; border-left: 1px solid #5b636c; margin-left: 8px; }
  `];
  render() {
    const rays = Array.from({ length: 12 }, (_, i) => svg`<path d="M27 -3l3.500 8h-7z" fill=${i % 2 ? "#fbe98c" : "#fdd94e"} transform=${`rotate(${i * 30} 27 19)`}/>`);
    return html`
      <button aria-label="Start">${pic(16, 16, svg`<path d="M0 2.300l6.800-1v6.200H0zM7.600 1.200L16 0v7.500H7.600zM0 8.400h6.800v6.300L0 13.700zM7.600 8.400H16V16l-8.400-1.200z" fill="#fff"/>`)}</button>
      <label class="search">${stroke(17, 17, "M10.500 1a5.200 5.200 0 1 0 .01 0M6.800 10L1 16", "#222", 1.4)}
        <input type="text" aria-label="Type here to search" placeholder="Type here to search" />
        ${pic(60, 38, svg`${rays}
          <defs><radialGradient id="sun" cx=".45" cy=".35"><stop offset="0" stop-color="#ffd84a"/><stop offset="1" stop-color="#f3a21c"/></radialGradient></defs>
          <circle cx="27" cy="19" r="15.500" fill="url(#sun)"/><ellipse cx="22" cy="15" rx="1.700" ry="3.200" fill="#222"/><ellipse cx="33" cy="15" rx="1.700" ry="3.200" fill="#222"/><path d="M18 21c4 8 15 8 19 0" stroke="#3a2a10" stroke-width="1.500"/>`)}
      </label>
      <button class="view" aria-label="Task view">${stroke(17, 16, "M1.500 0v2.500h9V0M1.500 16v-2.500h9V16M1.500 4.500h9v7h-9zM14.500 1v3M14.500 9v6M13 6.500h3", "#fff", 1.2)}</button>
      <button class="app run" aria-label="Edge">${edge(24)}</button>
      <button class="app act" aria-label="File Explorer">${openSm(24)}</button>
      <button class="app fox" aria-label="Firefox">${pic(24, 24, svg`
        <defs><linearGradient id="ff" x1=".8" y1="0" x2=".3" y2="1"><stop offset="0" stop-color="#fff04a"/><stop offset=".4" stop-color="#ff9a28"/><stop offset="1" stop-color="#f0307a"/></linearGradient></defs>
        <path d="M3 5l1-2 1 2 2 0c2-1 4-1 5 0 0-2 1-4 3-5 0 3 5 4 7 9 3 7-2 14-10 14S0 18 1 11c0-3 1-4 2-6z" fill="url(#ff)"/>
        <circle cx="12" cy="12.500" r="5" fill="#7a3be0"/><path d="M4 9c3-3 6-2 8 0-3 0-3 2-1 3 2 0 3-1 4-1 0 3-3 5-6 4-3 0-5-3-5-6z" fill="#ff9a28"/>`)}</button>
      <button class="app run" aria-label="Application">${pic(22, 18, svg`<path d="M0 0h22v18H0z" fill="#fff"/><path d="M0 0h22v2.500H0z" fill="#cfd8dc"/><path d="M2 4h11v12H2z" fill="#4f9a83"/><path d="M6 4h7v7z" fill="#a8d4c2"/><path d="M15 5.500h3M15 8.500h3M15 11.500h3" stroke="#b6bfc4"/><path d="M20 4v7" stroke="#333"/>`)}</button>
      <div class="tray">
        <button aria-label="Hidden icons">${stroke(12, 8, "M1 7l5-5 5 5", "#fff", 1.4)}</button>
        <button aria-label="Meet Now">${stroke(12, 16, "M2 4.500h5q1.500 0 1.500 1.500v4q0 1.500-1.500 1.500H2Q.7 11.500.7 10V6Q.7 4.500 2 4.500zM8.500 7l3-1.500v5L8.500 9M2.500 2q3-2 6 0M2.500 14q3 2 6 0", "#fff", 1.1)}</button>
        <button aria-label="Volume">${stroke(17, 14, "M1 5h2.500L7 1.500v11L3.500 9H1zM9 4.500q2 2.500 0 5M11.500 3q3 4 0 8M14 1.500q4 5.500 0 11", "#fff", 1)}</button>
        <button aria-label="Network">${stroke(17, 14, "M5.500 2.500h11v8H3.500V6M.5.5h4v4h-4zM2.500 4.500v5M9.500 10.500v3M6 13.500h7", "#fff")}</button>
        <button class="clock"><span>4:30 PM<br />10/3/2025</span></button>
        <button class="note" aria-label="Notifications">${stroke(17, 16, "M.5.5h16v12H11L8.500 15.500 6 12.500H.5z", "#fff", 1.1)}</button>
        <i class="peek"></i>
      </div>`;
  }
}

@customElement("app-root")
class AppRoot extends LitElement {
  static styles = [base, css`
    :host { display: flex; flex-direction: column; height: 100vh; min-height: 700px; overflow: hidden; background: #f7f7f7; font-family: "Open Sans", "Noto Sans", sans-serif; }
    main { position: relative; flex: 1; display: flex; padding: 0 3px 3px; }
    .frame { flex: 1; border: 1px solid #e6e6e6; border-radius: 8px; }
    .dialog { position: absolute; left: 358px; top: 560px; width: 366px; height: 84px; background: #f0f0f0; border: 1px solid #9c9c9c; border-top: 0; padding: 0 7px 8px; display: flex; flex-direction: column; justify-content: flex-end; align-items: flex-end; gap: 8px; font-size: 12px; }
    .sheet { flex: 1; width: 100%; background: #fff; border: 1px solid #dcdcdc; }
    .dialog button { width: 75px; height: 21px; background: #ccc; border: 1px solid #bfbfbf; color: #838383; flex: none; }
    file-explorer { position: absolute; left: 127px; right: 108px; top: 15px; height: 579px; }
    context-menu { position: absolute; left: 357px; top: 170px; width: 315px; }
    .mark { position: absolute; right: 48px; top: 584px; display: flex; align-items: center; gap: 8px; height: 66px; color: #f6f6f6; opacity: .9;
      font: 400 30px "Liberation Sans", sans-serif; text-shadow: 0 0 3px #999; filter: drop-shadow(0 0 1px #bbb); pointer-events: none; }
  `];
  render() {
    return html`
      <browser-chrome></browser-chrome>
      <main>
        <div class="frame"></div>
        <div class="dialog"><div class="sheet"></div><button disabled>Apply</button></div>
        <file-explorer></file-explorer>
        <div class="mark"><span>ANY</span>${pic(56, 62, svg`<g stroke="#f6f6f6" stroke-width="4"><path d="M3 12v38M10 54V8M16 4l38 25-38 27M17 16v30l25-17L17 12"/></g>`)}<span>RUN</span></div>
        <context-menu></context-menu>
      </main>
      <task-bar></task-bar>`;
  }
}
